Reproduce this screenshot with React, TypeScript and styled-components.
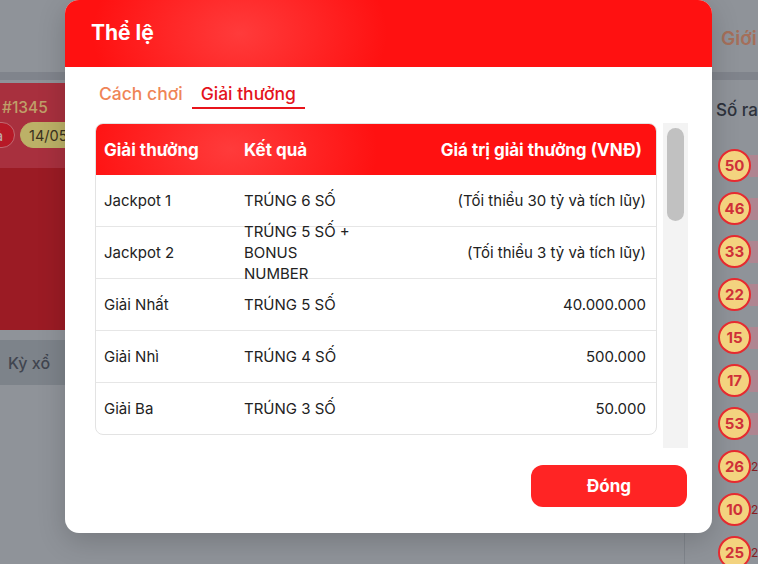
import React from "react";
import styled, { createGlobalStyle } from "styled-components";

const GlobalStyle = createGlobalStyle`
  * {
    box-sizing: border-box;
  }
  html,
  body {
    margin: 0;
    padding: 0;
  }
  body {
    font-family: Inter, "Noto Sans", sans-serif;
    background: #bfc4cd;
    overflow: hidden;
  }
`;

const Page = styled.div`
  position: relative;
  width: 758px;
  height: 564px;
  overflow: hidden;
  background: #bfc4cd;
`;

const TopBar = styled.header`
  display: grid;
  grid-template-columns: 685px 1fr;
  height: 80px;
  border-bottom: 8px solid #abb1bb;
`;

const NavLink = styled.a`
  display: flex;
  align-items: center;
  padding: 4px 0 0 36px;
  font-size: 19px;
  font-weight: 600;
  color: #dc9479;
  white-space: nowrap;
  text-decoration: none;
`;

const Main = styled.main`
  display: grid;
  grid-template-columns: 685px 1fr;
  height: calc(100% - 80px);
`;

const LeftCol = styled.section`
  display: flex;
  flex-direction: column;
  gap: 10px;
  padding-top: 3px;
  border-right: 1px solid #aab0ba;
`;

const DrawCard = styled.div`
  display: flex;
  flex-direction: column;
  height: 247px;
  background: #cf2530;
`;

const CardHead = styled.div`
  display: flex;
  flex-direction: column;
  gap: 4px;
  height: 85px;
  padding: 15px 0 0 2px;
  background: #e04053;
`;

const DrawNo = styled.div`
  font-size: 15.5px;
  font-weight: 500;
  line-height: 20px;
  color: #ffd58c;
`;

const ChipRow = styled.div`
  display: flex;
  gap: 5px;
  margin-left: -60px;
`;

const Chip = styled.span<{ $tone: "red" | "gold" }>`
  display: inline-flex;
  align-items: center;
  height: 26px;
  padding: 0 11px 0 8px;
  border-radius: 13px;
  font-size: 14.5px;
  white-space: nowrap;
  background: ${(p) => (p.$tone === "red" ? "#f52234" : "#fbec8a")};
  color: ${(p) => (p.$tone === "red" ? "#ffe6e6" : "#4f432a")};
  border: 1px solid ${(p) => (p.$tone === "red" ? "#ff8d99" : "#fbec8a")};
`;

const DrawRow = styled.div`
  display: flex;
  align-items: center;
  height: 45px;
  padding-left: 8px;
  background: #a7afb9;
  font-size: 16px;
  font-weight: 500;
  color: #575d6b;
`;

const RightPanel = styled.aside`
  padding: 20px 0 0 31px;
`;

const PanelTitle = styled.h3`
  margin: 0;
  font-size: 17px;
  line-height: 20px;
  font-weight: 500;
  color: #3c4350;
  white-space: nowrap;
`;

const BallList = styled.ul`
  display: flex;
  flex-direction: column;
  gap: 10px;
  margin: 29px 0 0;
  padding: 0 0 0 2px;
  list-style: none;
`;

const BallRow = styled.li`
  display: flex;
  align-items: center;
`;

const Ball = styled.span`
  position: relative;
  z-index: 1;
  display: flex;
  flex-shrink: 0;
  align-items: center;
  justify-content: center;
  width: 33px;
  height: 33px;
  border-radius: 50%;
  border: 2px solid #e62a30;
  background: #f3d37f;
  color: #cf3038;
  font-size: 15px;
  font-weight: 700;
`;

const Bar = styled.span`
  flex-shrink: 0;
  height: 22px;
  margin-left: -2px;
  background: #eab2c2;
`;

const Count = styled.span`
  margin-left: 2px;
  font-size: 12px;
  color: #b02a30;
  white-space: nowrap;
`;

const Overlay = styled.div`
  position: absolute;
  inset: 0;
  display: flex;
  align-items: flex-start;
  padding-left: 65px;
  background: rgba(0, 0, 0, 0.25);
`;

const Modal = styled.div`
  display: flex;
  flex-direction: column;
  width: 647px;
  height: 533px;
  border-radius: 14px;
  overflow: hidden;
  background: #fff;
  box-shadow: 0 8px 28px rgba(0, 0, 0, 0.18);
`;

const glow = (x: string) => `radial-gradient(
    ellipse 210px 150px at ${x} 50%,
    rgba(255, 110, 110, 0.45),
    rgba(255, 60, 60, 0) 70%
  ),
  #ff1111`;

const ModalHeader = styled.div`
  display: flex;
  align-items: center;
  flex-shrink: 0;
  height: 67px;
  padding: 0 0 2px 26px;
  background: ${glow("27%")};
  color: #fff;
  font-size: 21px;
  font-weight: 700;
`;

const ModalBody = styled.div`
  display: flex;
  flex-direction: column;
  flex: 1;
  padding: 12px 24px 26px 25px;
`;

const Tabs = styled.div`
  display: flex;
  height: 30px;
`;

const Tab = styled.button<{ $active?: boolean }>`
  display: flex;
  align-items: center;
  height: 30px;
  padding: 0 9px;
  border: 0;
  border-bottom: 2px solid ${(p) => (p.$active ? "#e8141b" : "transparent")};
  background: none;
  font-family: inherit;
  font-size: 17.5px;
  font-weight: 500;
  color: ${(p) => (p.$active ? "#e4141c" : "#ef8557")};
  cursor: pointer;
`;

const ScrollArea = styled.div`
  display: flex;
  height: 325px;
  margin-top: 14px;
`;

const Viewport = styled.div`
  flex: 1;
  min-width: 0;
  padding: 0 6px 0 5px;
  overflow: hidden;
`;

const Track = styled.div`
  flex: 0 0 25px;
  padding: 5px 4px;
  background: #f3f3f3;
`;

const Thumb = styled.div`
  height: 93px;
  border-radius: 9px;
  background: #c1c1c1;
`;

const TableFrame = styled.div`
  border: 1px solid #e3e3e3;
  border-radius: 8px;
  overflow: hidden;
`;

const cols = "140px 129px 1fr";

const HeadRow = styled.div`
  display: grid;
  grid-template-columns: ${cols};
  grid-template-rows: minmax(0, 1fr);
  height: 51px;
  background: ${glow("24%")};
`;

const HeadCell = styled.div<{ $right?: boolean }>`
  display: flex;
  align-items: center;
  justify-content: ${(p) => (p.$right ? "flex-end" : "flex-start")};
  padding: 0 ${(p) => (p.$right ? "14px" : "8px")} 0 8px;
  color: #fff;
  font-size: 17px;
  font-weight: 700;
  white-space: nowrap;
`;

const Row = styled.div`
  display: grid;
  grid-template-columns: ${cols};
  grid-template-rows: minmax(0, 1fr);
  height: 52px;
  border-bottom: 1px solid #e6e6e6;

  &:last-child {
    height: 51px;
    border-bottom: 0;
  }
`;

const Cell = styled.div<{ $right?: boolean }>`
  display: flex;
  align-items: center;
  justify-content: ${(p) => (p.$right ? "flex-end" : "flex-start")};
  min-height: 0;
  padding: 0 ${(p) => (p.$right ? "10px" : "8px")} 0 8px;
  font-size: 15px;
  line-height: 21px;
  color: #222;
`;

const Footer = styled.div`
  display: flex;
  justify-content: flex-end;
  margin-top: 17px;
`;

const CloseButton = styled.button`
  width: 156px;
  height: 42px;
  margin-right: 1px;
  border: 0;
  border-radius: 12px;
  background: #ff2424;
  color: #fff;
  font-family: inherit;
  font-size: 17px;
  font-weight: 700;
  cursor: pointer;
`;

const prizes = [
  { name: "Jackpot 1", match: "TRÚNG 6 SỐ", value: "(Tối thiểu 30 tỷ và tích lũy)" },
  { name: "Jackpot 2", match: "TRÚNG 5 SỐ + BONUS NUMBER", value: "(Tối thiểu 3 tỷ và tích lũy)" },
  { name: "Giải Nhất", match: "TRÚNG 5 SỐ", value: "40.000.000" },
  { name: "Giải Nhì", match: "TRÚNG 4 SỐ", value: "500.000" },
  { name: "Giải Ba", match: "TRÚNG 3 SỐ", value: "50.000" },
];

const hotBalls = [
  { n: 50, bar: 140, count: "31 lần" },
  { n: 46, bar: 136, count: "30 lần" },
  { n: 33, bar: 132, count: "29 lần" },
  { n: 22, bar: 128, count: "28 lần" },
  { n: 15, bar: 124, count: "27 lần" },
  { n: 17, bar: 120, count: "27 lần" },
  { n: 53, bar: 116, count: "26 lần" },
  { n: 26, bar: 0, count: "25 lần" },
  { n: 10, bar: 0, count: "25 lần" },
  { n: 25, bar: 0, count: "24 lần" },
];

const App = () => {
  return (
    <Page>
      <GlobalStyle />
      <TopBar>
        <div />
        <NavLink>Giới thiệu</NavLink>
      </TopBar>
      <Main>
        <LeftCol>
          <DrawCard>
            <CardHead>
              <DrawNo>#1345</DrawNo>
              <ChipRow>
                <Chip $tone="red">Kết quả</Chip>
                <Chip $tone="gold">14/05/2025</Chip>
              </ChipRow>
            </CardHead>
          </DrawCard>
          <DrawRow>Kỳ xổ</DrawRow>
        </LeftCol>
        <RightPanel>
          <PanelTitle>Số ra nhiều nhất</PanelTitle>
          <BallList>
            {hotBalls.map((b) => (
              <BallRow key={b.n}>
                <Ball>{b.n}</Ball>
                <Bar style={{ width: b.bar }} />
                <Count>{b.count}</Count>
              </BallRow>
            ))}
          </BallList>
        </RightPanel>
      </Main>

      <Overlay>
        <Modal>
          <ModalHeader>Thể lệ</ModalHeader>
          <ModalBody>
            <Tabs>
              <Tab>Cách chơi</Tab>
              <Tab $active>Giải thưởng</Tab>
            </Tabs>
            <ScrollArea>
              <Viewport>
                <TableFrame>
                  <HeadRow>
                    <HeadCell>Giải thưởng</HeadCell>
                    <HeadCell>Kết quả</HeadCell>
                    <HeadCell $right>Giá trị giải thưởng (VNĐ)</HeadCell>
                  </HeadRow>
                  {prizes.map((p) => (
                    <Row key={p.name}>
                      <Cell>{p.name}</Cell>
                      <Cell>{p.match}</Cell>
                      <Cell $right>{p.value}</Cell>
                    </Row>
                  ))}
                </TableFrame>
              </Viewport>
              <Track>
                <Thumb />
              </Track>
            </ScrollArea>
            <Footer>
              <CloseButton>Đóng</CloseButton>
            </Footer>
          </ModalBody>
        </Modal>
      </Overlay>
    </Page>
  );
};

export default App;
